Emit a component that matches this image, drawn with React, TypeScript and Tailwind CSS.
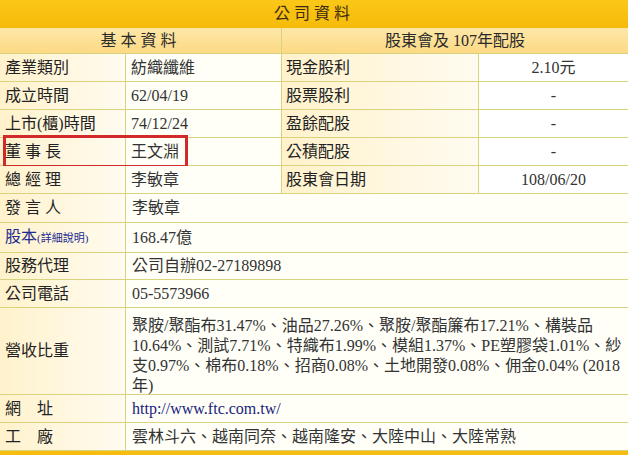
const FONT = "font-['Liberation_Serif','Noto_Sans_CJK_TC',serif]"

const labelBg = 'bg-linear-to-r from-[#fff2cc] to-[#fffbf0]'
const line = 'border-[#d9d37e]'

const upperRows = [
  { label: '產業類別', value: '紡織纖維', rLabel: '現金股利', rValue: '2.10元' },
  { label: '成立時間', value: '62/04/19', rLabel: '股票股利', rValue: '-' },
  { label: '上市(櫃)時間', value: '74/12/24', rLabel: '盈餘配股', rValue: '-' },
  { label: '董 事 長', value: '王文淵', rLabel: '公積配股', rValue: '-', boxed: true },
  { label: '總 經 理', value: '李敏章', rLabel: '股東會日期', rValue: '108/06/20' },
]

function LowerRow({ label, h, children, align = 'items-center' }: { label: React.ReactNode; h: string; children: React.ReactNode; align?: string }) {
  return (
    <div className={`flex ${h} border-b ${line}`}>
      <div className={`w-[126px] shrink-0 border-r ${line} ${labelBg} flex items-center pl-[5px] text-[#222]`}>{label}</div>
      <div className={`flex-1 bg-[#fffff8] flex ${align} pl-[6px] text-[#333]`}>{children}</div>
    </div>
  )
}

export default function App() {
  return (
    <div className={`w-[628px] h-[455px] overflow-hidden bg-white text-[16px] leading-[20px] ${FONT}`}>
      <div className="h-[28px] bg-linear-to-b from-[#fac718] to-[#f6bb08] flex items-center justify-center tracking-[4px] text-[#3a2a10]">
        公司資料
      </div>
      <div className={`flex h-[26px] border-b ${line} bg-linear-to-b from-[#fde7a8] to-[#fcd984] text-[#2a2a2a]`}>
        <div className={`w-[282px] border-r ${line} flex items-center justify-center tracking-[4px]`}>基本資料</div>
        <div className="flex-1 flex items-center justify-center">股東會及 107年配股</div>
      </div>

      {upperRows.map((r) => (
        <div key={r.label} className={`relative flex h-[28px] border-b ${line}`}>
          <div className={`w-[126px] shrink-0 border-r ${line} ${labelBg} flex items-center pl-[5px] text-[#222] whitespace-nowrap`}>
            {r.label}
          </div>
          <div className={`w-[156px] shrink-0 border-r ${line} bg-[#fffff8] flex items-center pl-[5px] text-[#333]`}>{r.value}</div>
          <div className={`w-[197px] shrink-0 border-r ${line} ${labelBg} flex items-center pl-[4px] text-[#222]`}>{r.rLabel}</div>
          <div className="flex-1 bg-white flex items-center justify-center text-[#333]">{r.rValue}</div>
          {r.boxed && (
            <div className="absolute left-[3px] top-[-3px] w-[185px] h-[33px] border-[3px] border-[#d22a2a] pointer-events-none" />
          )}
        </div>
      ))}

      <LowerRow h="h-[29px]" label="發 言 人">李敏章</LowerRow>
      <LowerRow
        h="h-[30px]"
        label={
          <span className="text-[#1e2b8f]">
            股本<span className="text-[11px]">(詳細說明)</span>
          </span>
        }
      >
        168.47億
      </LowerRow>
      <LowerRow h="h-[27px]" label="股務代理">公司自辦02-27189898</LowerRow>
      <LowerRow h="h-[28px]" label="公司電話">05-5573966</LowerRow>
      <LowerRow h="h-[87px]" label="營收比重" align="items-start pt-[8px]">
        <div className="whitespace-nowrap">
          聚胺/聚酯布31.47%、油品27.26%、聚胺/聚酯簾布17.21%、構裝品
          <br />
          10.64%、測試7.71%、特織布1.99%、模組1.37%、PE塑膠袋1.01%、紗
          <br />
          支0.97%、棉布0.18%、招商0.08%、土地開發0.08%、佣金0.04% (2018
          <br />
          年)
        </div>
      </LowerRow>
      <LowerRow h="h-[28px]" label={<span>網&nbsp;&nbsp;&nbsp;&nbsp;址</span>}>
        <span className="text-[#1a237e]">http://www.ftc.com.tw/</span>
      </LowerRow>
      <LowerRow h="h-[28px]" label={<span>工&nbsp;&nbsp;&nbsp;&nbsp;廠</span>}>雲林斗六、越南同奈、越南隆安、大陸中山、大陸常熟</LowerRow>
      <div className="h-[6px] bg-[#f6bc10]" />
    </div>
  )
}
